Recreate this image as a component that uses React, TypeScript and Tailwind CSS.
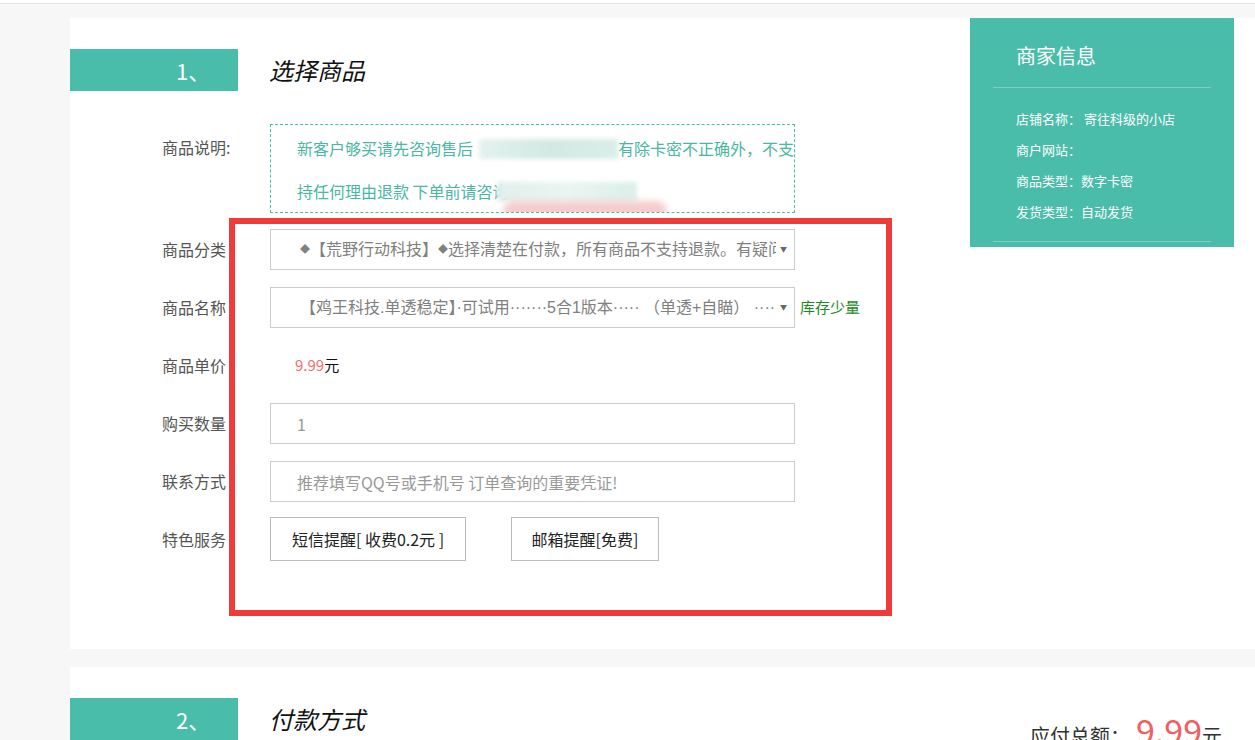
import React from 'react'

const teal = 'bg-[#4abcaa]'

function Label({ text }: { text: string }) {
  return (
    <div className="w-[200px] pl-[92px] shrink-0 text-[16px] text-[#555] leading-[41px] whitespace-nowrap">
      {text}
    </div>
  )
}

function SelectBox({ children }: { children: React.ReactNode }) {
  return (
    <div className="w-[525px] h-[41px] border border-[#cccccc] flex items-center pl-[29px] pr-[7px] bg-white">
      <div
        className="flex-1 overflow-hidden whitespace-nowrap text-[16px] text-[#808080]"
        style={{ fontFamily: '"Liberation Sans", "Noto Sans CJK SC", sans-serif' }}
      >
        {children}
      </div>
      <span className="ml-[4px] text-[7px] text-[#666]">▼</span>
    </div>
  )
}

function InputBox({ text }: { text: string }) {
  return (
    <div className="w-[525px] h-[41px] border border-[#cccccc] flex items-center pl-[26px] text-[16px] text-[#999] bg-white">
      {text}
    </div>
  )
}

export default function App() {
  return (
    <div
      className="min-h-[820px] bg-[#f7f7f7] text-[#333]"
      style={{ fontFamily: '"Noto Sans CJK SC", "Noto Sans", sans-serif' }}
    >
      {/* top strip */}
      <div className="h-[4px] bg-white border-b border-[#e4e4e4]" />

      {/* step 1 card */}
      <div className="mt-[14px] ml-[70px] h-[631px] bg-white flex relative">
        <div className="w-[900px] pt-[31px]">
          <div className="flex items-center">
            <div className={`w-[168px] h-[42px] ${teal} flex items-center pl-[106px] text-white text-[22px]`}>1、</div>
            <h2 className="ml-[31px] text-[24px] italic text-[#111]">选择商品</h2>
          </div>

          <div className="mt-[33px] flex flex-col">
            {/* description */}
            <div className="flex">
              <div className="w-[200px] pl-[92px] shrink-0 text-[16px] text-[#555] leading-[43px] pt-[2px]">商品说明:</div>
              <div className="relative w-[525px] h-[89px] border border-dashed border-[#4abcaa] pl-[26px] pt-[2px] overflow-hidden">
                <div className="text-[16px] leading-[43px] text-[#4ab6a4] whitespace-nowrap flex items-center">
                  <span>新客户够买请先咨询售后（</span>
                  <span className="inline-block w-[146px] h-[20px] -ml-[10px] bg-gradient-to-r from-[#e4f2ef] via-[#d2e9e3] to-[#d9eee9] blur-[2px]" />
                  <span>有除卡密不正确外，不支</span>
                </div>
                <div className="text-[16px] leading-[43px] text-[#4ab6a4] whitespace-nowrap flex items-center">
                  <span>持任何理由退款 下单前请咨询</span>
                  <span className="inline-block w-[140px] h-[20px] -ml-[12px] bg-gradient-to-r from-[#e0f0ec] via-[#eaf5f2] to-[#dcefe9] blur-[2px]" />
                </div>
                <div className="absolute left-[232px] top-[76px] w-[164px] h-[20px] rounded-full bg-[#f6cccc] blur-[3px]" />
              </div>
            </div>

            <div className="flex mt-[16px]">
              <Label text="商品分类" />
              <SelectBox>
                <span className="text-[10px] align-[2px]">◆</span>【荒野行动科技】<span className="text-[10px] align-[2px]">◆</span>选择清楚在付款，所有商品不支持退款。有疑问请联系客服
              </SelectBox>
            </div>

            <div className="flex items-center mt-[17px]">
              <Label text="商品名称" />
              <SelectBox>
                【鸡王科技.单透稳定】·可试用·······5合1版本····· （单透+自瞄） ········
              </SelectBox>
              <span className="ml-[5px] text-[15px] text-[#1f8a1f]">库存少量</span>
            </div>

            <div className="flex mt-[17px] h-[41px] items-center">
              <Label text="商品单价" />
              <div className="pl-[25px] text-[15px]">
                <span className="text-[#f07070]">9.99</span>
                <span className="text-[#111]">元</span>
              </div>
            </div>

            <div className="flex mt-[17px]">
              <Label text="购买数量" />
              <InputBox text="1" />
            </div>

            <div className="flex mt-[17px]">
              <Label text="联系方式" />
              <InputBox text="推荐填写QQ号或手机号 订单查询的重要凭证!" />
            </div>

            <div className="flex mt-[15px] items-center">
              <Label text="特色服务" />
              <div className="flex gap-[45px]">
                <button className="w-[196px] h-[44px] border border-[#bbbbbb] bg-white text-[16px] text-[#222]">短信提醒[ 收费0.2元 ]</button>
                <button className="w-[148px] h-[44px] border border-[#bbbbbb] bg-white text-[16px] text-[#222]">邮箱提醒[免费]</button>
              </div>
            </div>
          </div>
        </div>

        {/* merchant info */}
        <div className={`w-[264px] h-[229px] ${teal} text-white px-[23px]`}>
          <div className="pt-[24px] pl-[23px] text-[20px] leading-[28px] pb-[17px] border-b border-[#7fd0c3]">商家信息</div>
          <div className="pt-[15px] pl-[23px] text-[13px] leading-[31px] pb-[14px] border-b border-[#7fd0c3]">
            <div>店铺名称：&nbsp;寄往科级的小店</div>
            <div>商户网站：</div>
            <div>商品类型：数字卡密</div>
            <div>发货类型：自动发货</div>
          </div>
        </div>

        {/* annotation frame */}
        <div className="absolute left-[159px] top-[200px] w-[663px] h-[398px] border-[6px] border-[#f03b3b] pointer-events-none" />
      </div>

      {/* step 2 card */}
      <div className="mt-[18px] ml-[70px] bg-white pt-[31px] h-[200px]">
        <div className="flex items-start justify-between pr-[33px]">
          <div className="flex items-center">
            <div className={`w-[168px] h-[42px] ${teal} flex items-center pl-[106px] text-white text-[22px]`}>2、</div>
            <h2 className="ml-[31px] text-[24px] italic text-[#111]">付款方式</h2>
          </div>
          <div className="mt-[15px] flex items-baseline">
            <span className="text-[20px] text-[#333]">应付总额：</span>
            <span className="ml-[6px] text-[34px] leading-none text-[#f06060]">9.99</span>
            <span className="text-[20px] text-[#333]">元</span>
          </div>
        </div>
      </div>
    </div>
  )
}
